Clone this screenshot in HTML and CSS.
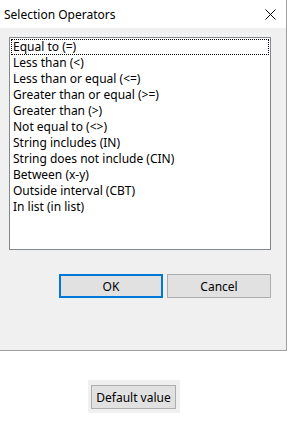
FILE: index.html
```html
<!DOCTYPE html>
<html lang="en">
<head>
    <meta charset="UTF-8">
    <meta name="viewport" content="width=device-width, initial-scale=1.0">
    <title>Selection Operators</title>
    <link rel="stylesheet" href="styles.css">
</head>
<body>
    <div class="dialog">
        <div class="titlebar">
            <span class="title">Selection Operators</span>
            <svg class="close" width="11" height="11" viewBox="0 0 11 11">
                <path d="M0.5 0.5 L10.5 10.5 M10.5 0.5 L0.5 10.5" stroke="#000" stroke-width="1" fill="none"/>
            </svg>
        </div>
        <div class="content">
            <ul class="listbox">
                <li class="focused">Equal to (=)</li>
                <li>Less than (&lt;)</li>
                <li>Less than or equal (&lt;=)</li>
                <li>Greater than or equal (&gt;=)</li>
                <li>Greater than (&gt;)</li>
                <li>Not equal to (&lt;&gt;)</li>
                <li>String includes (IN)</li>
                <li>String does not include (CIN)</li>
                <li>Between (x-y)</li>
                <li>Outside interval (CBT)</li>
                <li>In list (in list)</li>
            </ul>
            <div class="buttons">
                <button class="btn default">OK</button>
                <button class="btn">Cancel</button>
            </div>
        </div>
    </div>

    <div class="default-box">
        <button class="btn small">Default value</button>
    </div>
</body>
</html>
```

FILE: styles.css
```css
body {
    margin: 0;
    background: #fff;
    font-family: "Noto Sans", "Open Sans", sans-serif;
    font-size: 12px;
    color: #000;
}

.dialog {
    width: 286px;
    height: 350px;
    background: #f0f0f0;
    border-right: 1px solid #a0a0a0;
    border-bottom: 1px solid #a0a0a0;
}

.titlebar {
    height: 28px;
    background: #fff;
    display: flex;
    align-items: center;
    justify-content: space-between;
    padding: 0 10px 0 4px;
}

.title {
    font-size: 12px;
}

.close {
    display: block;
    margin-top: 1px;
}

.content {
    padding: 9px 15px 0 9px;
}

.listbox {
    list-style: none;
    margin: 0;
    padding: 1px;
    height: 209px;
    background: #fff;
    border: 1px solid #828790;
}

.listbox li {
    height: 16px;
    line-height: 15px;
    padding-left: 2px;
    white-space: nowrap;
    overflow: hidden;
    box-sizing: border-box;
}

.listbox li.focused {
    outline: 1px dotted #000;
    outline-offset: -1px;
}

.buttons {
    display: flex;
    justify-content: flex-end;
    gap: 4px;
    margin-top: 24px;
}

.btn {
    width: 104px;
    height: 24px;
    background: #e1e1e1;
    border: 1px solid #adadad;
    font-family: inherit;
    font-size: 12px;
    color: #000;
    padding: 0;
}

.btn.default {
    border: 2px solid #0078d7;
}

.default-box {
    margin: 29px 0 0 88px;
    width: 85px;
    padding: 5px 4px 4px 3px;
    background: #f0f0f0;
}

.btn.small {
    width: 85px;
    display: block;
}
```
